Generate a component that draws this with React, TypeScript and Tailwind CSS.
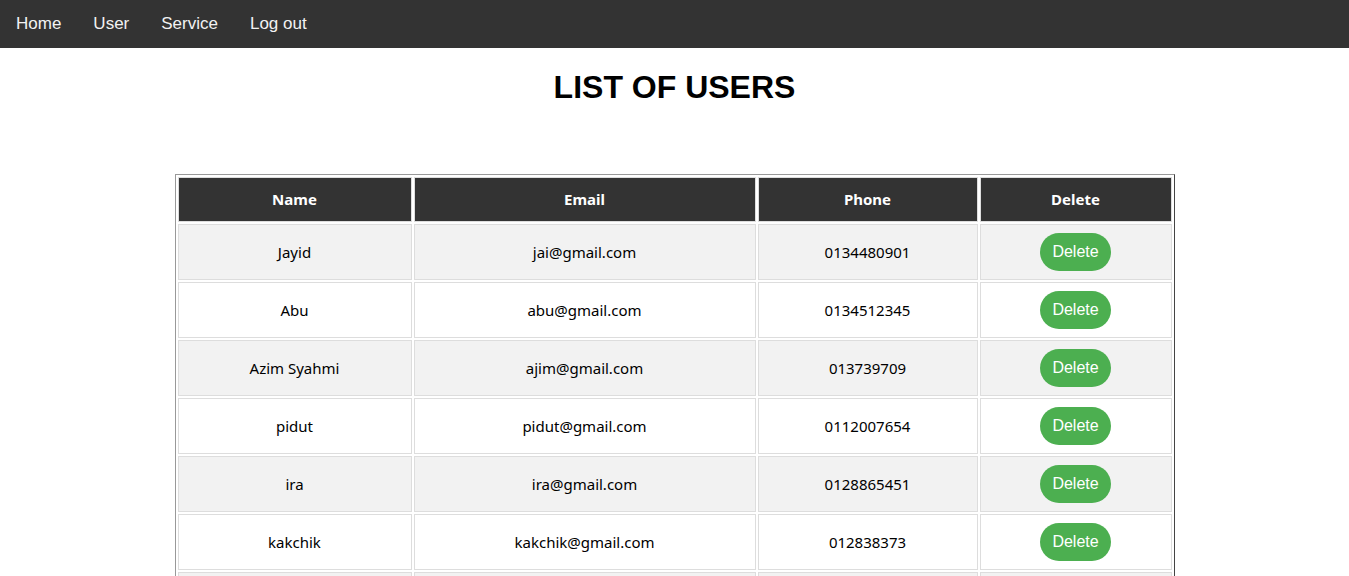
const users = [
  { name: 'Jayid', email: 'jai@gmail.com', phone: '0134480901' },
  { name: 'Abu', email: 'abu@gmail.com', phone: '0134512345' },
  { name: 'Azim Syahmi', email: 'ajim@gmail.com', phone: '013739709' },
  { name: 'pidut', email: 'pidut@gmail.com', phone: '0112007654' },
  { name: 'ira', email: 'ira@gmail.com', phone: '0128865451' },
  { name: 'kakchik', email: 'kakchik@gmail.com', phone: '012838373' },
  { name: 'amin', email: 'amin@gmail.com', phone: '0137788990' },
]

function Navbar() {
  return (
    <nav className="bg-[#333] h-12 flex font-['Liberation_Sans',Arial,sans-serif] text-[17px] text-[#f2f2f2]">
      {['Home', 'User', 'Service', 'Log out'].map((item) => (
        <a key={item} href="#" className="px-4 py-[14px] leading-5">
          {item}
        </a>
      ))}
    </nav>
  )
}

export default function App() {
  const cell = 'border border-[#ddd] text-center p-0'
  return (
    <div className="min-h-screen bg-white">
      <Navbar />
      <h1 className="text-center font-bold text-[32px] leading-[37px] mt-[21px] font-['Liberation_Sans',Arial,sans-serif] text-black">
        LIST OF USERS
      </h1>
      <table className="w-[1000px] mx-auto mt-[68px] table-fixed border-separate border-spacing-[2px] border border-t-[#999] border-l-[#999] border-r-[#444] border-b-[#444] font-['Noto_Sans',sans-serif] text-[15px]">
        <thead>
          <tr>
            <th className={`${cell} w-[234px] h-[45px] bg-[#333] text-white font-bold`}>Name</th>
            <th className={`${cell} w-[342px] h-[45px] bg-[#333] text-white font-bold`}>Email</th>
            <th className={`${cell} w-[220px] h-[45px] bg-[#333] text-white font-bold`}>Phone</th>
            <th className={`${cell} h-[45px] bg-[#333] text-white font-bold`}>Delete</th>
          </tr>
        </thead>
        <tbody>
          {users.map((u, i) => (
            <tr key={u.email} className={i % 2 === 0 ? 'bg-[#f2f2f2]' : 'bg-white'}>
              <td className={`${cell} h-[56px] text-black`}>{u.name}</td>
              <td className={`${cell} h-[56px] text-black`}>{u.email}</td>
              <td className={`${cell} h-[56px] text-black`}>{u.phone}</td>
              <td className={`${cell} h-[56px]`}>
                <button className="w-[71px] h-[38px] rounded-full bg-[#4caf50] text-white text-base font-['Liberation_Sans',Arial,sans-serif]">
                  Delete
                </button>
              </td>
            </tr>
          ))}
        </tbody>
      </table>
    </div>
  )
}
